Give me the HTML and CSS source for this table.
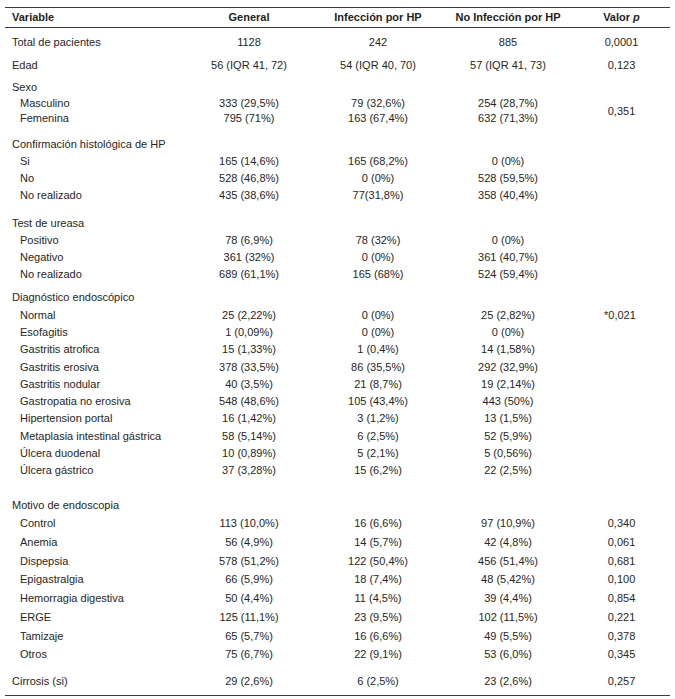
FILE: index.html
```html
<!DOCTYPE html>
<html lang="es">
<head>
<meta charset="utf-8">
<title>Tabla</title>
<link rel="stylesheet" href="styles.css">
</head>
<body>
<table class="data">
  <colgroup>
    <col class="c-var"><col class="c-gen"><col class="c-inf"><col class="c-no"><col class="c-p">
  </colgroup>
  <thead>
    <tr>
      <th class="lbl">Variable</th>
      <th>General</th>
      <th>Infección por HP</th>
      <th>No Infección por HP</th>
      <th>Valor <i>p</i></th>
    </tr>
  </thead>
  <tbody>
    <tr class="r-total"><td class="lbl">Total de pacientes</td><td>1128</td><td>242</td><td>885</td><td>0,0001</td></tr>
    <tr class="r-edad"><td class="lbl">Edad</td><td>56 (IQR 41, 72)</td><td>54 (IQR 40, 70)</td><td>57 (IQR 41, 73)</td><td>0,123</td></tr>

    <tr class="g-sexo first"><td class="lbl">Sexo</td><td></td><td></td><td></td><td></td></tr>
    <tr class="g-sexo"><td class="sub">Masculino</td><td>333 (29,5%)</td><td>79 (32,6%)</td><td>254 (28,7%)</td><td rowspan="2" class="pv">0,351</td></tr>
    <tr class="g-sexo"><td class="sub">Femenina</td><td>795 (71%)</td><td>163 (67,4%)</td><td>632 (71,3%)</td></tr>

    <tr class="g-conf first"><td class="lbl">Confirmación histológica de HP</td><td></td><td></td><td></td><td></td></tr>
    <tr class="g-conf"><td class="sub">Si</td><td>165 (14,6%)</td><td>165 (68,2%)</td><td>0 (0%)</td><td></td></tr>
    <tr class="g-conf"><td class="sub">No</td><td>528 (46,8%)</td><td>0 (0%)</td><td>528 (59,5%)</td><td></td></tr>
    <tr class="g-conf"><td class="sub">No realizado</td><td>435 (38,6%)</td><td>77(31,8%)</td><td>358 (40,4%)</td><td></td></tr>

    <tr class="g-test first"><td class="lbl">Test de ureasa</td><td></td><td></td><td></td><td></td></tr>
    <tr class="g-test"><td class="sub">Positivo</td><td>78 (6,9%)</td><td>78 (32%)</td><td>0 (0%)</td><td></td></tr>
    <tr class="g-test"><td class="sub">Negativo</td><td>361 (32%)</td><td>0 (0%)</td><td>361 (40,7%)</td><td></td></tr>
    <tr class="g-test"><td class="sub">No realizado</td><td>689 (61,1%)</td><td>165 (68%)</td><td>524 (59,4%)</td><td></td></tr>

    <tr class="g-diag first"><td class="lbl">Diagnóstico endoscópico</td><td></td><td></td><td></td><td></td></tr>
    <tr class="g-diag"><td class="sub">Normal</td><td>25 (2,22%)</td><td>0 (0%)</td><td>25 (2,82%)</td><td class="star">*0,021</td></tr>
    <tr class="g-diag"><td class="sub">Esofagitis</td><td>1 (0,09%)</td><td>0 (0%)</td><td>0 (0%)</td><td></td></tr>
    <tr class="g-diag"><td class="sub">Gastritis atrofica</td><td>15 (1,33%)</td><td>1 (0,4%)</td><td>14 (1,58%)</td><td></td></tr>
    <tr class="g-diag"><td class="sub">Gastritis erosiva</td><td>378 (33,5%)</td><td>86 (35,5%)</td><td>292 (32,9%)</td><td></td></tr>
    <tr class="g-diag"><td class="sub">Gastritis nodular</td><td>40 (3,5%)</td><td>21 (8,7%)</td><td>19 (2,14%)</td><td></td></tr>
    <tr class="g-diag"><td class="sub">Gastropatia no erosiva</td><td>548 (48,6%)</td><td>105 (43,4%)</td><td>443 (50%)</td><td></td></tr>
    <tr class="g-diag"><td class="sub">Hipertension portal</td><td>16 (1,42%)</td><td>3 (1,2%)</td><td>13 (1,5%)</td><td></td></tr>
    <tr class="g-diag"><td class="sub">Metaplasia intestinal gástrica</td><td>58 (5,14%)</td><td>6 (2,5%)</td><td>52 (5,9%)</td><td></td></tr>
    <tr class="g-diag"><td class="sub">Úlcera duodenal</td><td>10 (0,89%)</td><td>5 (2,1%)</td><td>5 (0,56%)</td><td></td></tr>
    <tr class="g-diag"><td class="sub">Úlcera gástrico</td><td>37 (3,28%)</td><td>15 (6,2%)</td><td>22 (2,5%)</td><td></td></tr>

    <tr class="g-mot first"><td class="lbl">Motivo de endoscopia</td><td></td><td></td><td></td><td></td></tr>
    <tr class="g-mot"><td class="sub">Control</td><td>113 (10,0%)</td><td>16 (6,6%)</td><td>97 (10,9%)</td><td>0,340</td></tr>
    <tr class="g-mot"><td class="sub">Anemia</td><td>56 (4,9%)</td><td>14 (5,7%)</td><td>42 (4,8%)</td><td>0,061</td></tr>
    <tr class="g-mot"><td class="sub">Dispepsia</td><td>578 (51,2%)</td><td>122 (50,4%)</td><td>456 (51,4%)</td><td>0,681</td></tr>
    <tr class="g-mot"><td class="sub">Epigastralgia</td><td>66 (5,9%)</td><td>18 (7,4%)</td><td>48 (5,42%)</td><td>0,100</td></tr>
    <tr class="g-mot"><td class="sub">Hemorragia digestiva</td><td>50 (4,4%)</td><td>11 (4,5%)</td><td>39 (4,4%)</td><td>0,854</td></tr>
    <tr class="g-mot"><td class="sub">ERGE</td><td>125 (11,1%)</td><td>23 (9,5%)</td><td>102 (11,5%)</td><td>0,221</td></tr>
    <tr class="g-mot"><td class="sub">Tamizaje</td><td>65 (5,7%)</td><td>16 (6,6%)</td><td>49 (5,5%)</td><td>0,378</td></tr>
    <tr class="g-mot"><td class="sub">Otros</td><td>75 (6,7%)</td><td>22 (9,1%)</td><td>53 (6,0%)</td><td>0,345</td></tr>

    <tr class="r-cirr"><td class="lbl">Cirrosis (si)</td><td>29 (2,6%)</td><td>6 (2,5%)</td><td>23 (2,6%)</td><td>0,257</td></tr>
  </tbody>
</table>
</body>
</html>
```

FILE: styles.css
```css
html, body {
  margin: 0;
  padding: 0;
  background: #ffffff;
}

body {
  font-family: "Liberation Sans", Arial, sans-serif;
  font-size: 11px;
  color: #262626;
}

.data {
  margin: 7px 0 0 5px;
  width: 665px;
  table-layout: fixed;
  border-collapse: separate;
  border-spacing: 0;
}

.c-var { width: 180px; }
.c-gen { width: 128px; }
.c-inf { width: 130px; }
.c-no  { width: 130px; }
.c-p   { width: 97px; }

.data th,
.data td {
  padding: 0;
  text-align: center;
  vertical-align: top;
  white-space: nowrap;
  font-weight: normal;
}

.data th {
  font-weight: bold;
  line-height: 19px;
  border-top: 1px solid #3c3c3c;
  border-bottom: 1px solid #3c3c3c;
  color: #1e1e1e;
}

.data th i {
  font-style: italic;
}

.data .lbl {
  text-align: left;
  padding-left: 7px;
}

.data .sub {
  text-align: left;
  padding-left: 15px;
}

.data td.pv {
  vertical-align: middle;
}

.data td.star {
  text-align: left;
  padding-left: 31px;
}

.r-total td { line-height: 19px; padding-top: 4.5px; }
.r-edad td  { line-height: 19px; padding-top: 4px; }

.g-sexo td { line-height: 15.5px; }
.g-sexo.first td { padding-top: 5.75px; }

.g-conf td { line-height: 17px; }
.g-conf.first td { padding-top: 8.75px; }

.g-test td { line-height: 17px; }
.g-test.first td { padding-top: 11px; }

.g-diag td { line-height: 17.3px; }
.g-diag.first td { padding-top: 6.85px; }

.g-mot td { line-height: 18.7px; }
.g-mot.first td { padding-top: 16px; }

.r-cirr td {
  line-height: 19px;
  padding-top: 8.5px;
  padding-bottom: 3.5px;
  border-bottom: 1px solid #3c3c3c;
}
```
